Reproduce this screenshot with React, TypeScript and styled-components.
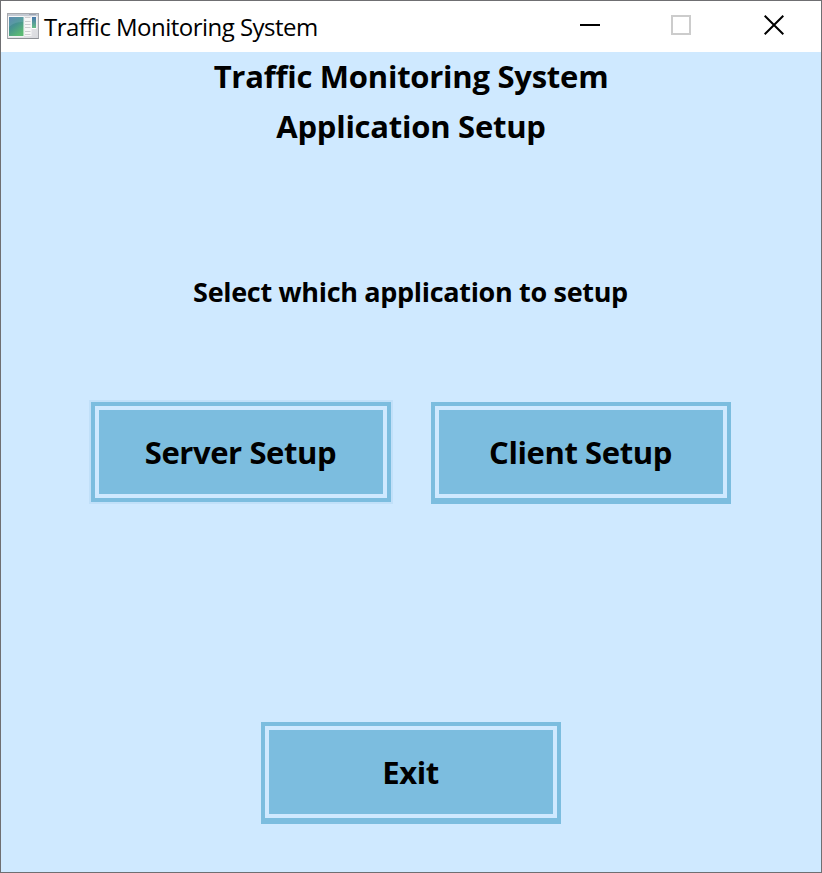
import React from "react";
import styled, { createGlobalStyle } from "styled-components";

const GlobalStyle = createGlobalStyle`
  * { box-sizing: border-box; }
  body { margin: 0; }
`;

const Window = styled.div`
  width: 822px;
  height: 873px;
  display: flex;
  flex-direction: column;
  border: 1px solid #6f6f72;
  background: #cfe9ff;
  color: #000;
  font-family: "Open Sans", "Noto Sans", sans-serif;
  font-variant-ligatures: none;
  overflow: hidden;
`;

const TitleBar = styled.header`
  height: 51px;
  flex: none;
  display: flex;
  align-items: flex-start;
  justify-content: space-between;
  background: #fff;
`;

const Caption = styled.div`
  display: flex;
  align-items: flex-start;
  padding: 12px 0 0 6px;
`;

const CaptionText = styled.span`
  margin: -3px 0 0 5px;
  font-size: 24px;
  line-height: 34px;
  letter-spacing: -0.53px;
  white-space: nowrap;
`;

const Controls = styled.div`
  display: flex;
  height: 48px;
`;

const ControlButton = styled.button<{ $width: number }>`
  width: ${(p) => p.$width}px;
  height: 48px;
  padding: 0;
  border: 0;
  background: transparent;
  display: flex;
  align-items: center;
  justify-content: center;
`;

const Content = styled.main`
  flex: 1;
  display: flex;
  flex-direction: column;
  align-items: center;
`;

const Heading = styled.h1`
  margin: 0;
  height: 50px;
  font-size: 31px;
  font-weight: 700;
  line-height: 48px;
  letter-spacing: -0.25px;
  white-space: nowrap;
`;

const Prompt = styled.p`
  margin: 116px 0 0;
  height: 49px;
  padding-right: 1px;
  font-size: 27px;
  font-weight: 700;
  line-height: 48px;
  letter-spacing: -0.32px;
  white-space: nowrap;
`;

const Choices = styled.div`
  display: flex;
  gap: 40px;
  margin-top: 85px;
  height: 102px;
`;

const SetupButton = styled.button<{ $focused?: boolean }>`
  width: 300px;
  height: ${(p) => (p.$focused ? 100 : 102)}px;
  padding: 0 1px 0 0;
  border: 4px solid #7cbddf;
  border-bottom-width: ${(p) => (p.$focused ? 4 : 6)}px;
  background: #7cbddf;
  box-shadow: ${(p) => (p.$focused ? "0 0 0 2px #c1e0f9, " : "")}inset 0 0 0 4px #cfe9ff;
  color: #000;
  font-family: inherit;
  font-variant-ligatures: none;
  font-size: 31px;
  font-weight: 700;
  line-height: 42px;
  letter-spacing: -0.4px;
`;

const Footer = styled.div`
  margin-top: 218px;
`;

const AppIcon = () => (
  <svg width="32" height="27" viewBox="0 0 32 27">
    <defs>
      <linearGradient id="frame" x1="0" y1="0" x2="1" y2="1">
        <stop offset="0" stopColor="#f4f4f6" />
        <stop offset="1" stopColor="#d9dade" />
      </linearGradient>
      <linearGradient id="pane" x1="0" y1="0" x2="0.6" y2="1">
        <stop offset="0" stopColor="#4d79a8" />
        <stop offset="0.5" stopColor="#479390" />
        <stop offset="1" stopColor="#5cb974" />
      </linearGradient>
      <linearGradient id="strip" x1="0" y1="0" x2="0" y2="1">
        <stop offset="0" stopColor="#4676ad" />
        <stop offset="1" stopColor="#67bf86" />
      </linearGradient>
    </defs>
    <rect x="0.5" y="0.5" width="31" height="25" fill="url(#frame)" stroke="#a7a9ae" />
    <path d="M1 25.5H31.5" stroke="#8f9196" />
    <path d="M1 2H31" stroke="#c3c9d2" strokeWidth="2" />
    <path d="M22 1.5H29" stroke="#9ba5b5" />
    <rect x="1.5" y="3.5" width="15.5" height="20" fill="#fff" />
    <rect x="2" y="4" width="14.5" height="19" fill="url(#pane)" />
    <path d="M2 14C6 10 11 9 16.5 9V4H2Z" fill="#8fc0d0" opacity="0.25" />
    <rect x="17.5" y="4" width="7" height="19" fill="#f7f7f7" />
    <path d="M18 4.5H23.5M18 8.5H23.5M18 11.5H23.5M18 14.5H23.5M18 18.5H23.5M18 21.5H23.5" stroke="#cdcdd0" />
    <rect x="24.5" y="3.5" width="5" height="12.5" fill="#fff" />
    <rect x="25" y="4" width="4" height="11" fill="url(#strip)" />
  </svg>
);

export default function App() {
  return (
    <>
      <GlobalStyle />
      <Window>
        <TitleBar>
          <Caption>
            <AppIcon />
            <CaptionText>Traffic Monitoring System</CaptionText>
          </Caption>
          <Controls>
            <ControlButton $width={90} aria-label="Minimize">
              <svg width="20" height="20" viewBox="0 0 20 20">
                <path d="M0 10H20" stroke="#000" strokeWidth="2" />
              </svg>
            </ControlButton>
            <ControlButton $width={92} aria-label="Maximize" disabled>
              <svg width="20" height="20" viewBox="0 0 20 20">
                <rect x="1" y="1" width="18" height="18" fill="none" stroke="#ccc" strokeWidth="2" />
              </svg>
            </ControlButton>
            <ControlButton $width={94} aria-label="Close">
              <svg width="20" height="20" viewBox="0 0 20 20">
                <path d="M0.7 0.7L19.3 19.3M19.3 0.7L0.7 19.3" stroke="#000" strokeWidth="2" />
              </svg>
            </ControlButton>
          </Controls>
        </TitleBar>
        <Content>
          <Heading>Traffic Monitoring System</Heading>
          <Heading>Application Setup</Heading>
          <Prompt>Select which application to setup</Prompt>
          <Choices>
            <SetupButton $focused>Server Setup</SetupButton>
            <SetupButton>Client Setup</SetupButton>
          </Choices>
          <Footer>
            <SetupButton>Exit</SetupButton>
          </Footer>
        </Content>
      </Window>
    </>
  );
}
